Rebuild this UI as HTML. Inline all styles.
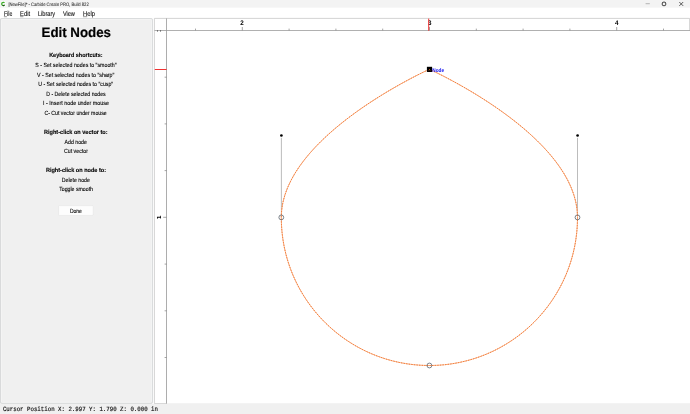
<!DOCTYPE html>
<html><head><meta charset="utf-8">
<title>Carbide Create</title>
<style>
html,body{margin:0;padding:0;}
body{width:690px;height:414px;overflow:hidden;background:#fff;}
svg{display:block;will-change:transform;}
</style></head><body>
<svg width="690" height="414" viewBox="0 0 690 414" text-rendering="geometricPrecision">
<!-- window chrome -->
<rect x="0" y="0" width="690" height="7.8" fill="#f3f3f3"/>
<rect x="0" y="7.8" width="690" height="10.5" fill="#ffffff"/>
<!-- app icon -->
<rect x="0.7" y="1.2" width="5.2" height="5.6" rx="1" fill="#fbfbfb"/>
<path d="M4.55 2.75 A1.65 1.65 0 1 0 4.6 5.0" fill="none" stroke="#3fae2a" stroke-width="1.25"/>
<path d="M2.7 5.45 A1.65 1.65 0 0 0 4.45 5.2" fill="none" stroke="#15201a" stroke-width="1.0"/>
<!-- window buttons -->
<line x1="645.6" y1="3.7" x2="649.8" y2="3.7" stroke="#8a8a8a" stroke-width="0.6"/>
<rect x="662.3" y="2.2" width="3.4" height="3.4" rx="1" fill="none" stroke="#222" stroke-width="0.95"/>
<path d="M679.3 2L683.2 5.9M683.2 2L679.3 5.9" stroke="#2a2a2a" stroke-width="0.75" fill="none"/>
<!-- menu underlines -->
<g stroke="#333" stroke-width="0.5">
<line x1="3.9" y1="16.7" x2="6.9" y2="16.7"/><line x1="20.1" y1="16.7" x2="23.4" y2="16.7"/><line x1="83" y1="16.7" x2="87.2" y2="16.7"/>
</g>
<!-- left panel -->
<rect x="0" y="18.3" width="152.6" height="396" fill="#f0f0f0"/>
<rect x="0.5" y="18.6" width="151.9" height="384.6" rx="1.2" fill="none" stroke="#cdcfd1" stroke-width="0.8"/>
<rect x="1.3" y="19.4" width="150.3" height="383" rx="1" fill="none" stroke="#f8f8f8" stroke-width="0.6"/>
<!-- done button -->
<rect x="58.6" y="205.6" width="34.6" height="9.8" rx="0.8" fill="#fdfdfd" stroke="#e0e0e0" stroke-width="0.5"/>
<!-- canvas -->
<rect x="154.4" y="18.4" width="540" height="385.4" fill="#fff"/>
<path d="M689.6 30.5V18.4H154.4V403.6H166.5" fill="none" stroke="#c2c2c2" stroke-width="0.7"/>
<line x1="166.5" y1="403.7" x2="690" y2="403.7" stroke="#e6e6e6" stroke-width="0.6"/>
<line x1="154.4" y1="30.5" x2="690" y2="30.5" stroke="#9c9c9c" stroke-width="0.8"/>
<line x1="166.5" y1="18.4" x2="166.5" y2="403.7" stroke="#989898" stroke-width="0.8"/>
<g stroke="#757575" stroke-width="0.65">
<line x1="195.5" y1="28.6" x2="195.5" y2="30.4"/>
<line x1="242.3" y1="27.0" x2="242.3" y2="30.4"/>
<line x1="289.1" y1="28.6" x2="289.1" y2="30.4"/>
<line x1="335.9" y1="28.6" x2="335.9" y2="30.4"/>
<line x1="382.7" y1="28.6" x2="382.7" y2="30.4"/>
<line x1="429.5" y1="27.0" x2="429.5" y2="30.4"/>
<line x1="476.3" y1="28.6" x2="476.3" y2="30.4"/>
<line x1="523.1" y1="28.6" x2="523.1" y2="30.4"/>
<line x1="569.9" y1="28.6" x2="569.9" y2="30.4"/>
<line x1="616.7" y1="27.0" x2="616.7" y2="30.4"/>
<line x1="663.5" y1="28.6" x2="663.5" y2="30.4"/>
<line x1="164.6" y1="77.2" x2="166.5" y2="77.2"/>
<line x1="164.6" y1="123.9" x2="166.5" y2="123.9"/>
<line x1="164.6" y1="170.6" x2="166.5" y2="170.6"/>
<line x1="163.2" y1="217.3" x2="166.5" y2="217.3"/>
<line x1="164.6" y1="264.1" x2="166.5" y2="264.1"/>
<line x1="164.6" y1="310.8" x2="166.5" y2="310.8"/>
<line x1="164.6" y1="357.5" x2="166.5" y2="357.5"/>
</g>
<circle cx="157.5" cy="30.9" r="0.55" fill="#444"/><circle cx="160.5" cy="30.9" r="0.55" fill="#444"/>
<g font-family="Liberation Sans, DejaVu Sans, sans-serif" font-weight="bold" font-size="6.7" fill="#000">
<text x="240.3" y="25" textLength="3.5" lengthAdjust="spacingAndGlyphs">2</text>
<text x="427.9" y="25" textLength="3.5" lengthAdjust="spacingAndGlyphs">3</text>
<text x="615.1" y="25" textLength="3.5" lengthAdjust="spacingAndGlyphs">4</text>
</g>
<text transform="translate(161.2 217.3) rotate(-90)" x="0" y="0" text-anchor="middle" font-family="DejaVu Sans, Liberation Sans, sans-serif" font-weight="bold" font-size="5.5" fill="#000">1</text>
<line x1="428.7" y1="18.6" x2="428.7" y2="30.8" stroke="#f03232" stroke-width="1"/>
<line x1="154.8" y1="69.5" x2="166.6" y2="69.5" stroke="#f03232" stroke-width="1"/>
<!-- handles -->
<line x1="281.4" y1="137.8" x2="281.4" y2="217.3" stroke="#b4b4b4" stroke-width="0.9"/>
<line x1="577.5" y1="137.8" x2="577.5" y2="217.3" stroke="#b4b4b4" stroke-width="0.9"/>
<circle cx="281.4" cy="135.5" r="1.35" fill="#000"/>
<circle cx="577.6" cy="135.5" r="1.35" fill="#000"/>
<!-- curve -->
<path d="M429.4 69.30000000000001 C429.4 69.30000000000001 577.5 135.60 577.5 217.4 C577.5 299.20 511.20 365.5 429.4 365.5 C347.60 365.5 281.29999999999995 299.20 281.29999999999995 217.4 C281.29999999999995 135.60 429.4 69.30000000000001 429.4 69.30000000000001Z" fill="none" stroke="#f9bb98" stroke-width="1.0"/>
<path d="M429.4 69.30000000000001 C429.4 69.30000000000001 577.5 135.60 577.5 217.4 C577.5 299.20 511.20 365.5 429.4 365.5 C347.60 365.5 281.29999999999995 299.20 281.29999999999995 217.4 C281.29999999999995 135.60 429.4 69.30000000000001 429.4 69.30000000000001Z" fill="none" stroke="#f2803e" stroke-width="1.0" stroke-dasharray="1.5 1.1"/>
<g fill="none" stroke="#46505a" stroke-width="0.7">
<circle cx="281.3" cy="217.4" r="2.4"/>
<circle cx="577.5" cy="217.4" r="2.4"/>
<circle cx="429.4" cy="365.5" r="2.4"/>
</g>
<rect x="426.9" y="66.8" width="5.2" height="5.2" fill="#000"/>
<circle cx="429.5" cy="69.6" r="0.55" fill="#e06a20"/><path d="M427.6 71.2L429.5 69.9L431.4 71.2" fill="none" stroke="#5a3018" stroke-width="0.5"/>
<text x="432.3" y="71.9" textLength="11.8" lengthAdjust="spacingAndGlyphs" font-family="Liberation Sans, DejaVu Sans, sans-serif" font-weight="bold" font-size="5.4" fill="#1414f0">Node</text>
<!-- status bar -->
<rect x="0" y="404" width="690" height="10" fill="#f0f0f0"/>
<!-- texts -->
<g opacity="0.995">
<text x="8.40" y="5.80" textLength="80.30" lengthAdjust="spacingAndGlyphs" font-family="Liberation Sans, DejaVu Sans, sans-serif" font-size="4.9" fill="#333" stroke="#333" stroke-width="0.08">[NewFile]* - Carbide Create PRO, Build 822</text>
<text x="3.90" y="15.90" textLength="8.40" lengthAdjust="spacingAndGlyphs" font-family="Liberation Sans, DejaVu Sans, sans-serif" font-size="7.0" fill="#111" stroke="#111" stroke-width="0.12">File</text>
<text x="20.10" y="15.90" textLength="10.00" lengthAdjust="spacingAndGlyphs" font-family="Liberation Sans, DejaVu Sans, sans-serif" font-size="7.0" fill="#111" stroke="#111" stroke-width="0.12">Edit</text>
<text x="38.00" y="15.90" textLength="17.10" lengthAdjust="spacingAndGlyphs" font-family="Liberation Sans, DejaVu Sans, sans-serif" font-size="7.0" fill="#111" stroke="#111" stroke-width="0.12">Library</text>
<text x="62.90" y="15.90" textLength="12.00" lengthAdjust="spacingAndGlyphs" font-family="Liberation Sans, DejaVu Sans, sans-serif" font-size="7.0" fill="#111" stroke="#111" stroke-width="0.12">View</text>
<text x="83.00" y="15.90" textLength="11.90" lengthAdjust="spacingAndGlyphs" font-family="Liberation Sans, DejaVu Sans, sans-serif" font-size="7.0" fill="#111" stroke="#111" stroke-width="0.12">Help</text>
<text x="41.50" y="37.00" textLength="69.50" lengthAdjust="spacingAndGlyphs" font-family="Liberation Sans, DejaVu Sans, sans-serif" font-size="13.8" font-weight="bold" fill="#000" stroke="#000" stroke-width="0.2">Edit Nodes</text>
<text x="49.20" y="57.00" textLength="53.30" lengthAdjust="spacingAndGlyphs" font-family="Liberation Sans, DejaVu Sans, sans-serif" font-size="6.0" font-weight="bold" fill="#000" stroke="#000" stroke-width="0.12">Keyboard shortcuts:</text>
<text x="35.30" y="67.00" textLength="81.30" lengthAdjust="spacingAndGlyphs" font-family="Liberation Sans, DejaVu Sans, sans-serif" font-size="6.0" fill="#000" stroke="#000" stroke-width="0.12">S - Set selected nodes to &quot;smooth&quot;</text>
<text x="37.00" y="76.70" textLength="77.40" lengthAdjust="spacingAndGlyphs" font-family="Liberation Sans, DejaVu Sans, sans-serif" font-size="6.0" fill="#000" stroke="#000" stroke-width="0.12">V - Set selected nodes to &quot;sharp&quot;</text>
<text x="38.20" y="86.30" textLength="75.00" lengthAdjust="spacingAndGlyphs" font-family="Liberation Sans, DejaVu Sans, sans-serif" font-size="6.0" fill="#000" stroke="#000" stroke-width="0.12">U - Set selected nodes to &quot;cusp&quot;</text>
<text x="46.30" y="96.00" textLength="59.40" lengthAdjust="spacingAndGlyphs" font-family="Liberation Sans, DejaVu Sans, sans-serif" font-size="6.0" fill="#000" stroke="#000" stroke-width="0.12">D - Delete selected nodes</text>
<text x="43.10" y="105.40" textLength="65.80" lengthAdjust="spacingAndGlyphs" font-family="Liberation Sans, DejaVu Sans, sans-serif" font-size="6.0" fill="#000" stroke="#000" stroke-width="0.12">I - Insert node under mouse</text>
<text x="44.40" y="114.90" textLength="62.30" lengthAdjust="spacingAndGlyphs" font-family="Liberation Sans, DejaVu Sans, sans-serif" font-size="6.0" fill="#000" stroke="#000" stroke-width="0.12">C- Cut vector under mouse</text>
<text x="44.00" y="133.90" textLength="63.60" lengthAdjust="spacingAndGlyphs" font-family="Liberation Sans, DejaVu Sans, sans-serif" font-size="6.0" font-weight="bold" fill="#000" stroke="#000" stroke-width="0.12">Right-click on vector to:</text>
<text x="64.60" y="143.70" textLength="22.30" lengthAdjust="spacingAndGlyphs" font-family="Liberation Sans, DejaVu Sans, sans-serif" font-size="6.0" fill="#000" stroke="#000" stroke-width="0.12">Add node</text>
<text x="64.00" y="153.20" textLength="23.90" lengthAdjust="spacingAndGlyphs" font-family="Liberation Sans, DejaVu Sans, sans-serif" font-size="6.0" fill="#000" stroke="#000" stroke-width="0.12">Cut vector</text>
<text x="45.90" y="172.00" textLength="60.20" lengthAdjust="spacingAndGlyphs" font-family="Liberation Sans, DejaVu Sans, sans-serif" font-size="6.0" font-weight="bold" fill="#000" stroke="#000" stroke-width="0.12">Right-click on node to:</text>
<text x="61.80" y="181.90" textLength="28.00" lengthAdjust="spacingAndGlyphs" font-family="Liberation Sans, DejaVu Sans, sans-serif" font-size="6.0" fill="#000" stroke="#000" stroke-width="0.12">Delete node</text>
<text x="59.20" y="191.30" textLength="33.80" lengthAdjust="spacingAndGlyphs" font-family="Liberation Sans, DejaVu Sans, sans-serif" font-size="6.0" fill="#000" stroke="#000" stroke-width="0.12">Toggle smooth</text>
<text x="69.90" y="212.90" textLength="12.00" lengthAdjust="spacingAndGlyphs" font-family="Liberation Sans, DejaVu Sans, sans-serif" font-size="6.0" fill="#000" stroke="#000" stroke-width="0.12">Done</text>
<text x="2.90" y="411.20" textLength="155.10" lengthAdjust="spacingAndGlyphs" font-family="Liberation Mono, DejaVu Sans Mono, monospace" font-size="6.5" fill="#111" stroke="#111" stroke-width="0.16">Cursor Position X: 2.997 Y: 1.790 Z: 0.000 in</text>
</g>
</svg>
</body></html>
